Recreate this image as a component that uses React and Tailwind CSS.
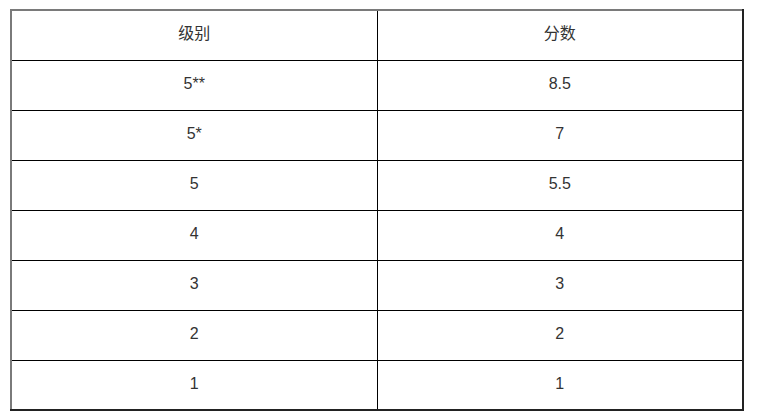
// Score table — 级别 / 分数
const rows = [
  ['5**', '8.5'],
  ['5*', '7'],
  ['5', '5.5'],
  ['4', '4'],
  ['3', '3'],
  ['2', '2'],
  ['1', '1'],
];

export default function App() {
  return (
    <div
      className="min-h-screen bg-white pt-[9px] pl-[10px] text-[16px] leading-[20px] text-[#333]"
      style={{ fontFamily: '"Liberation Sans", Arial, "Noto Sans CJK SC", sans-serif' }}
    >
      <table className="w-[734px] table-fixed border-collapse border-2 border-t-[#7a7a7a] border-l-[#7a7a7a] border-r-[#222] border-b-[#222]">
        <thead>
          <tr>
            <th className="h-[50px] w-1/2 border border-black pb-[2px] text-center font-normal">级别</th>
            <th className="h-[50px] w-1/2 border border-black pb-[2px] text-center font-normal">分数</th>
          </tr>
        </thead>
        <tbody>
          {rows.map(([level, score]) => (
            <tr key={level}>
              <td className="h-[50px] border border-black pb-[2px] text-center">{level}</td>
              <td className="h-[50px] border border-black pb-[2px] text-center">{score}</td>
            </tr>
          ))}
        </tbody>
      </table>
    </div>
  );
}
